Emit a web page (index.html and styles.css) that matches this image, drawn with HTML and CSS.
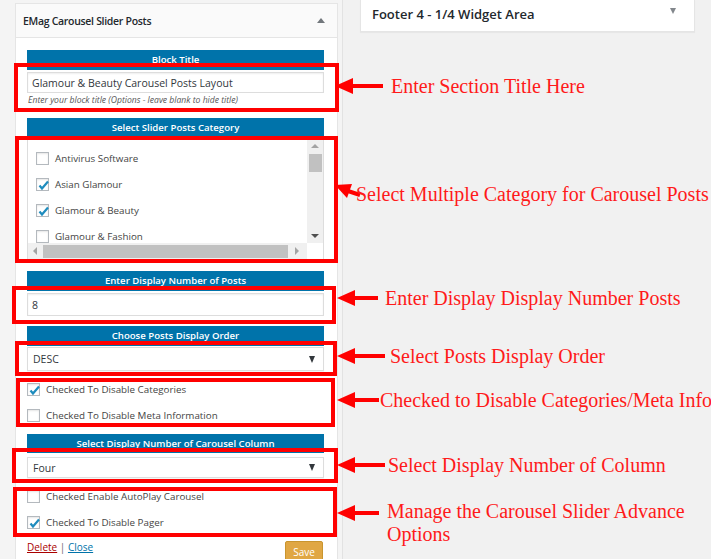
FILE: index.html
```html
<!DOCTYPE html>
<html>
<head>
<meta charset="utf-8">
<link rel="stylesheet" href="styles.css">
</head>
<body>
<div class="page">
  <div class="sidebar">
    <div class="widget">
      <div class="widget-head">
        <span class="widget-title">EMag Carousel Slider Posts</span>
        <span class="tri-up"></span>
      </div>
      <div class="widget-body">
        <div class="group g1">
          <div class="bar">Block Title</div>
          <div class="field f-title">Glamour &amp; Beauty Carousel Posts Layout</div>
          <div class="help">Enter your block title (Options - leave blank to hide title)</div>
        </div>
        <div class="group g2">
          <div class="bar">Select Slider Posts Category</div>
          <div class="catlist">
            <div class="cat-items">
              <div class="cat"><span class="cb"></span>Antivirus Software</div>
              <div class="cat"><span class="cb on"><svg viewBox="0 0 13 13"><path d="M2.5 6.5 L5 9.5 L11 2.5" /></svg></span>Asian Glamour</div>
              <div class="cat"><span class="cb on"><svg viewBox="0 0 13 13"><path d="M2.5 6.5 L5 9.5 L11 2.5" /></svg></span>Glamour &amp; Beauty</div>
              <div class="cat"><span class="cb"></span>Glamour &amp; Fashion</div>
            </div>
            <div class="vscroll">
              <span class="arr up"></span>
              <span class="vthumb"></span>
              <span class="vspace"></span>
              <span class="arr down"></span>
            </div>
            <div class="hscroll">
              <span class="arr left"></span>
              <span class="hthumb"></span>
              <span class="arr right"></span>
            </div>
            <div class="corner"></div>
          </div>
        </div>
        <div class="group g3">
          <div class="bar">Enter Display Number of Posts</div>
          <div class="field f-num">8</div>
        </div>
        <div class="group g4">
          <div class="bar">Choose Posts Display Order</div>
          <div class="select s-order"><span>DESC</span><span class="tri-down"></span></div>
          <div class="checks c1">
            <label class="check"><span class="cb on"><svg viewBox="0 0 13 13"><path d="M2.5 6.5 L5 9.5 L11 2.5" /></svg></span>Checked To Disable Categories</label>
            <label class="check"><span class="cb"></span>Checked To Disable Meta Information</label>
          </div>
        </div>
        <div class="group g5">
          <div class="bar b5">Select Display Number of Carousel Column</div>
          <div class="select s-col"><span>Four</span><span class="tri-down"></span></div>
          <div class="checks c2">
            <label class="check"><span class="cb"></span>Checked Enable AutoPlay Carousel</label>
            <label class="check"><span class="cb on"><svg viewBox="0 0 13 13"><path d="M2.5 6.5 L5 9.5 L11 2.5" /></svg></span>Checked To Disable Pager</label>
          </div>
        </div>
        <div class="actions">
          <div class="links"><a class="del">Delete</a> <span class="sep">|</span> <a class="close">Close</a></div>
          <button class="save">Save</button>
        </div>
      </div>
    </div>
  </div>
  <div class="rightcol">
    <div class="footer-area">
      <span>Footer 4 - 1/4 Widget Area</span>
      <span class="tri-small"></span>
    </div>
  </div>
</div>

<div class="overlay">
  <div class="rbox rb1"></div>
  <div class="rbox rb2"></div>
  <div class="rbox rb3"></div>
  <div class="rbox rb4"></div>
  <div class="rbox rb5"></div>
  <div class="rbox rb6"></div>
  <div class="rbox rb7"></div>

  <div class="callout co1">
    <svg class="arrow" width="48" height="18" viewBox="0 0 48 18"><polygon points="0,9 18,1 18,17"/><rect x="16" y="7" width="32" height="4"/></svg>
    <span class="note n1">Enter Section Title Here</span>
  </div>
  <svg class="diag" width="30" height="20" viewBox="0 0 30 20"><polygon points="2,4 19,3 14,17"/><line x1="15" y1="10" x2="27" y2="14" stroke="#ff0000" stroke-width="4"/></svg>
  <div class="callout co2">
    <span class="note">Select Multiple Category for Carousel Posts</span>
  </div>
  <div class="callout co3">
    <svg class="arrow" width="41" height="18" viewBox="0 0 41 18"><polygon points="0,9 18,1 18,17"/><rect x="16" y="7" width="25" height="4"/></svg>
    <span class="note n3">Enter Display Display Number Posts</span>
  </div>
  <div class="callout co4">
    <svg class="arrow" width="48" height="18" viewBox="0 0 48 18"><polygon points="0,9 18,1 18,17"/><rect x="16" y="7" width="32" height="4"/></svg>
    <span class="note n4">Select Posts Display Order</span>
  </div>
  <div class="callout co5">
    <svg class="arrow" width="42" height="18" viewBox="0 0 42 18"><polygon points="0,9 18,1 18,17"/><rect x="16" y="7" width="26" height="4"/></svg>
    <span class="note n5">Checked to Disable Categories/Meta Info</span>
  </div>
  <div class="callout co6">
    <svg class="arrow" width="48" height="18" viewBox="0 0 48 18"><polygon points="0,9 18,1 18,17"/><rect x="16" y="7" width="32" height="4"/></svg>
    <span class="note n6">Select Display Number of Column</span>
  </div>
  <div class="callout co7">
    <svg class="arrow" width="42" height="18" viewBox="0 0 42 18"><polygon points="0,9 18,1 18,17"/><rect x="16" y="7" width="26" height="4"/></svg>
    <span class="note n7">Manage the Carousel Slider Advance<br>Options</span>
  </div>
</div>
</body>
</html>
```

FILE: styles.css
```css
* { box-sizing: border-box; }
html, body {
  margin: 0;
  padding: 0;
}
body {
  width: 711px;
  height: 559px;
  overflow: hidden;
  background: #f1f1f1;
  font-family: "Open Sans", "Noto Sans", sans-serif;
  color: #32373c;
  position: relative;
}
.page {
  display: flex;
  align-items: flex-start;
  gap: 17px;
  height: 559px;
}
.sidebar {
  width: 343px;
  height: 559px;
  flex: none;
  padding: 3px 5px 0 15px;
  background: #f4f4f4;
  border-right: 1px solid #e2e2e2;
}
.widget {
  width: 323px;
  background: #fff;
  border: 1px solid #e5e5e5;
  height: 570px;
}
.widget-head {
  height: 34px;
  background: #fafafa;
  border-bottom: 1px solid #e5e5e5;
  display: flex;
  align-items: center;
  justify-content: space-between;
  padding: 0 12px 0 7px;
}
.widget-title {
  font-size: 10.5px;
  font-weight: 600;
  color: #23282d;
  letter-spacing: -0.3px;
}
.tri-up {
  width: 0; height: 0;
  border-left: 4px solid transparent;
  border-right: 4px solid transparent;
  border-bottom: 5px solid #72777c;
}
.widget-body {
  padding: 12px 13px 0 11px;
}
.bar {
  background: #0073aa;
  color: #fff;
  height: 20px;
  line-height: 20px;
  text-align: center;
  font-size: 9.6px;
  font-weight: 600;
}
.b5 { height: 19px; line-height: 19px; }
.field {
  border: 1px solid #ddd;
  box-shadow: inset 0 1px 2px rgba(0,0,0,.07);
  font-size: 10.5px;
  color: #32373c;
  display: flex;
  align-items: center;
  padding: 0 4px;
}
.f-title { margin-top: 2px; height: 21px; }
.help {
  font-size: 8.6px;
  font-style: italic;
  color: #555;
  line-height: 12px;
  margin-top: 1px;
  padding-left: 1px;
}
.g1 { margin-bottom: 12px; }
.g2 { margin-bottom: 11px; }
.f-num { margin-top: 2px; height: 23px; }
.g3 { margin-bottom: 10px; }

.catlist {
  margin-top: 1px;
  height: 121px;
  border: 1px solid #ddd;
  display: grid;
  grid-template-columns: 1fr 16px;
  grid-template-rows: 1fr 16px;
}
.cat-items {
  overflow: hidden;
  padding: 5px 0 0 8px;
}
.cat {
  height: 26px;
  display: flex;
  align-items: center;
  font-size: 9.8px;
  color: #444;
}
.cat .cb { margin-right: 6px; }
.cb {
  width: 13px;
  height: 13px;
  border: 1px solid #b4b9be;
  background: #fff;
  box-shadow: inset 0 1px 2px rgba(0,0,0,.1);
  flex: none;
  position: relative;
  display: inline-block;
}
.cb svg {
  position: absolute;
  left: 0; top: 0;
  width: 13px; height: 13px;
  fill: none;
  stroke: #1e8cbe;
  stroke-width: 2.2;
}
.vscroll {
  background: #f0f0f0;
  display: flex;
  flex-direction: column;
  align-items: center;
  padding: 4px 0 5px;
}
.vthumb {
  width: 13px;
  height: 18px;
  background: #c1c1c1;
  margin-top: 6px;
}
.vspace { flex: 1; }
.arr { width: 0; height: 0; display: block; }
.arr.up {
  border-left: 4px solid transparent;
  border-right: 4px solid transparent;
  border-bottom: 4px solid #a3a3a3;
}
.arr.down {
  border-left: 4px solid transparent;
  border-right: 4px solid transparent;
  border-top: 4px solid #505050;
}
.hscroll {
  background: #f0f0f0;
  display: flex;
  align-items: center;
  padding: 0 8px 0 5px;
}
.arr.left {
  border-top: 4px solid transparent;
  border-bottom: 4px solid transparent;
  border-right: 4px solid #a3a3a3;
}
.arr.right {
  border-top: 4px solid transparent;
  border-bottom: 4px solid transparent;
  border-left: 4px solid #a3a3a3;
}
.hthumb {
  height: 13px;
  flex: 1;
  background: #c1c1c1;
  margin: 0 7px 0 6px;
}
.corner { background: #fff; }

.select {
  border: 1px solid #ddd;
  box-shadow: 0 1px 1px rgba(0,0,0,.04);
  display: flex;
  align-items: center;
  justify-content: space-between;
  padding: 0 8px 0 5px;
  font-size: 10.5px;
  color: #32373c;
}
.s-order { height: 24px; margin-top: 1px; }
.s-col { height: 21px; margin-top: 4px; }
.tri-down {
  width: 0; height: 0;
  border-left: 3.5px solid transparent;
  border-right: 3.5px solid transparent;
  border-top: 7px solid #32373c;
}
.checks { padding-top: 5px; }
.c1 { margin-bottom: 6px; }
.check {
  height: 26px;
  display: flex;
  align-items: center;
  font-size: 9.8px;
  color: #444;
}
.check .cb { margin-right: 6px; }
.actions {
  margin-top: 6px;
  display: flex;
  justify-content: space-between;
  align-items: flex-start;
}
.links {
  font-size: 10px;
  line-height: 12px;
}
.del { color: #a00; text-decoration: underline; }
.close { color: #0073aa; text-decoration: underline; }
.sep { color: #666; }
.save {
  width: 38px;
  height: 22px;
  background: #e0a744;
  border: 1px solid #c9952f;
  border-radius: 2px;
  color: #fff;
  font-family: "Open Sans", sans-serif;
  font-size: 10px;
  padding: 0;
  margin-right: 1px;
}

.rightcol {
  width: 335px;
  flex: none;
}
.footer-area {
  height: 32px;
  background: #fff;
  border: 1px solid #e5e5e5;
  border-top: none;
  box-shadow: 0 1px 1px rgba(0,0,0,.04);
  display: flex;
  align-items: center;
  justify-content: space-between;
  padding: 0 18px 3px 11px;
  font-size: 13px;
  font-weight: 600;
  color: #23282d;
}
.tri-small {
  width: 0; height: 0;
  border-left: 3.5px solid transparent;
  border-right: 3.5px solid transparent;
  border-top: 6px solid #82878c;
  margin-bottom: 6px;
}

/* annotation layer drawn over the screenshot */
.overlay {
  position: absolute;
  left: 0; top: 0;
  width: 711px; height: 559px;
  pointer-events: none;
}
.rbox {
  position: absolute;
  border: 4px solid #ff0000;
}
.rb1 { left: 14px; top: 63px; width: 325px; height: 49px; }
.rb2 { left: 15px; top: 136px; width: 323px; height: 127px; }
.rb3 { left: 12px; top: 286px; width: 324px; height: 38px; }
.rb4 { left: 15px; top: 341px; width: 322px; height: 35px; }
.rb5 { left: 16px; top: 378px; width: 319px; height: 49px; }
.rb6 { left: 12px; top: 448px; width: 326px; height: 35px; }
.rb7 { left: 13px; top: 487px; width: 324px; height: 50px; }

.callout {
  position: absolute;
  display: flex;
  align-items: center;
  height: 24px;
}
.arrow { fill: #ff0000; flex: none; }
.diag { position: absolute; left: 333px; top: 181px; fill: #ff0000; }
.note {
  font-family: "Liberation Serif", "Times New Roman", serif;
  font-size: 20px;
  color: #ff1a1a;
  white-space: nowrap;
  line-height: 23px;
}
.co1 { left: 335px; top: 74px; }
.n1 { margin-left: 8px; }
.co2 { left: 356px; top: 182px; }
.co3 { left: 337px; top: 286px; }
.n3 { margin-left: 7px; }
.co4 { left: 337px; top: 344px; }
.n4 { margin-left: 5px; }
.co5 { left: 337px; top: 388px; }
.n5 { margin-left: 1px; }
.co6 { left: 337px; top: 453px; }
.n6 { margin-left: 3px; }
.co7 { left: 337px; top: 500px; align-items: flex-start; height: auto; }
.co7 .arrow { margin-top: 4px; }
.n7 { margin-left: 8px; }
```
